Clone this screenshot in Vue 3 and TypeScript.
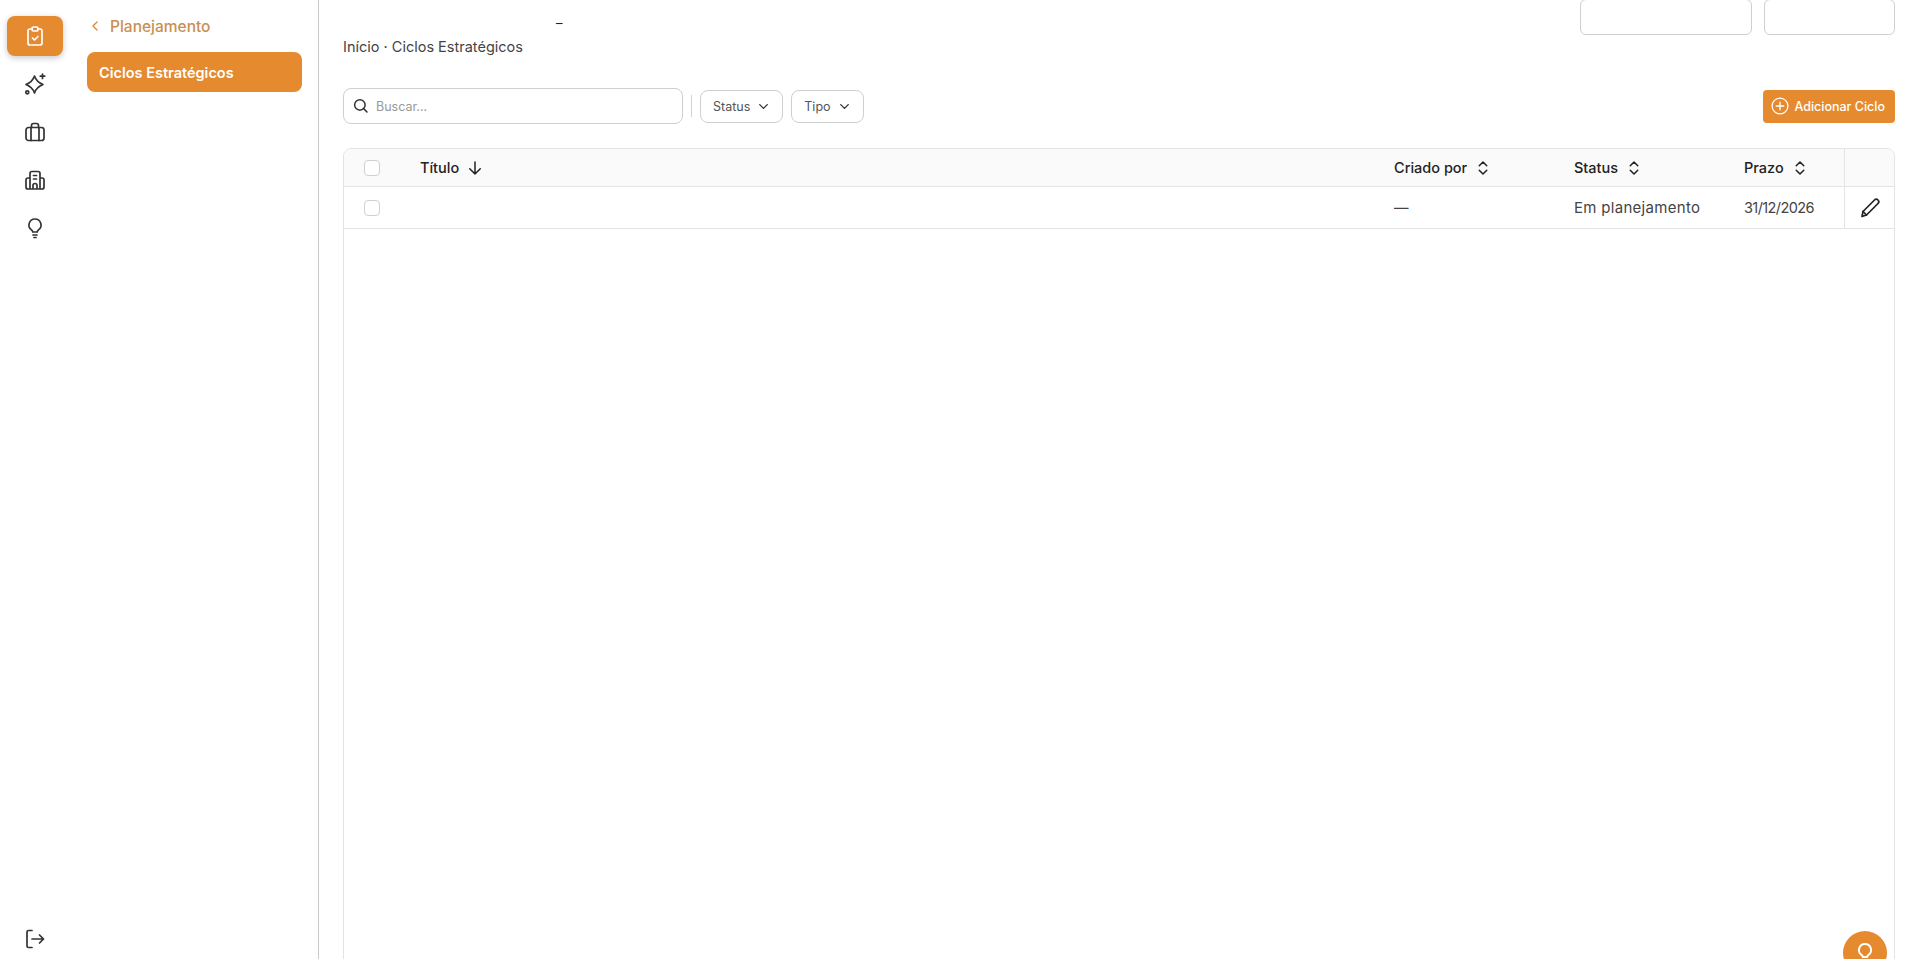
<template>
  <div class="page">
    <aside class="rail">
      <nav class="rail-top">
        <a class="rail-btn active">
          <svg viewBox="0 0 24 24"><path d="M9 5H7a2 2 0 0 0-2 2v12a2 2 0 0 0 2 2h10a2 2 0 0 0 2-2V7a2 2 0 0 0-2-2h-2" /><rect x="9" y="3" width="6" height="4" rx="1.600" /><path d="m9.500 14 2 2 3.500-3.500" /></svg>
        </a>
        <a class="rail-btn">
          <svg viewBox="0 0 24 24"><path d="M11.500 4Q13.500 10 20 12.500 13.500 15 11.500 21 9.500 15 3 12.500 9.500 10 11.500 4z" /><path d="M19.500 2v4.500M17.300 4.200h4.400" /><circle cx="4.300" cy="20.300" r="1.500" /></svg>
        </a>
        <a class="rail-btn">
          <svg viewBox="0 0 24 24"><rect x="3" y="7.500" width="18" height="13" rx="2.500" /><path d="M8 20.500v-13M16 20.500v-13M8.500 7.500V5.500a2 2 0 0 1 2-2h3a2 2 0 0 1 2 2v2" /></svg>
        </a>
        <a class="rail-btn">
          <svg viewBox="0 0 24 24"><path d="M7 21V5.500a2 2 0 0 1 2-2h6a2 2 0 0 1 2 2V21M7 10H5a2 2 0 0 0-2 2v7a2 2 0 0 0 2 2h14a2 2 0 0 0 2-2v-7a2 2 0 0 0-2-2h-2M10.500 7.500h3M10.500 11h3M10 21v-3.500a2 2 0 0 1 4 0V21" /></svg>
        </a>
        <a class="rail-btn">
          <svg viewBox="0 0 24 24"><path d="M12 3a6 6 0 0 0-3.500 10.900c.8.600 1.200 1.300 1.200 2.100h4.600c0-.8.400-1.500 1.200-2.100A6 6 0 0 0 12 3zM10 19h4M11 21.500h2" /></svg>
        </a>
      </nav>
      <a class="rail-btn logout">
        <svg viewBox="0 0 24 24"><path d="M9 3.500H5.500A1.500 1.500 0 0 0 4 5v14a1.500 1.500 0 0 0 1.500 1.500H9M9 12h11.500M16.500 8l4 4-4 4" /></svg>
      </a>
    </aside>

    <aside class="panel">
      <a class="back">
        <svg viewBox="0 0 24 24"><path d="m15 6-6 6 6 6" /></svg>
        <span>Planejamento</span>
      </a>
      <a class="panel-item">Ciclos Estratégicos</a>
    </aside>

    <main class="content">
      <header class="top">
        <div class="heading">
          <h1 class="title">–</h1>
          <p class="crumbs">Início · Ciclos Estratégicos</p>
        </div>
        <div class="top-actions">
          <div class="top-box wide"></div>
          <div class="top-box narrow"></div>
        </div>
      </header>

      <div class="toolbar">
        <label class="search">
          <svg viewBox="0 0 24 24"><circle cx="10.500" cy="10.500" r="7" /><path d="m20 20-4.500-4.500" /></svg>
          <span>Buscar...</span>
        </label>
        <span class="sep"></span>
        <button class="filter" v-for="f in filters" :key="f">
          {{ f }}
          <svg viewBox="0 0 24 24"><path d="m6 9 6 6 6-6" /></svg>
        </button>
        <button class="add">
          <svg viewBox="0 0 24 24"><circle cx="12" cy="12" r="9.500" /><path d="M12 7.500v9M7.500 12h9" /></svg>
          Adicionar Ciclo
        </button>
      </div>

      <section class="table">
        <div class="row head">
          <div class="cell"><span class="check"></span></div>
          <div class="cell">Título
            <svg class="sort" viewBox="0 0 24 24"><path d="M12 4v16M5 13l7 7 7-7" /></svg>
          </div>
          <div class="cell" v-for="c in sortable" :key="c">{{ c }}
            <svg class="sort" viewBox="0 0 24 24"><path d="m7 9 5-5 5 5M7 15l5 5 5-5" /></svg>
          </div>
          <div class="cell action"></div>
        </div>
        <div class="row body">
          <div class="cell"><span class="check"></span></div>
          <div class="cell"></div>
          <div class="cell">—</div>
          <div class="cell status">Em planejamento</div>
          <div class="cell date">31/12/2026</div>
          <div class="cell action">
            <svg class="pencil" viewBox="0 0 24 24"><path d="M4 20.500l1-5L16.500 4a2.500 2.500 0 0 1 3.500 0h0a2.500 2.500 0 0 1 0 3.500L8.500 19z" /><path d="M5 15.500l3.500 3.500" /></svg>
          </div>
        </div>
      </section>
    </main>

    <button class="fab">
      <svg viewBox="0 0 24 24"><path d="M12 3a6 6 0 0 0-3.500 10.900c.8.600 1.200 1.300 1.200 2.100h4.600c0-.8.400-1.500 1.200-2.100A6 6 0 0 0 12 3zM10 19h4M11 21.500h2" /></svg>
    </button>
  </div>
</template>

<script setup lang="ts">
const filters: string[] = ['Status', 'Tipo']
const sortable: string[] = ['Criado por', 'Status', 'Prazo']
</script>

<style>
html,
body {
  margin: 0;
  height: 100%;
  overflow: hidden;
  background: #fff;
}
</style>

<style scoped>
.page {
  display: flex;
  height: 959px;
  overflow: hidden;
  font-family: Inter, "Liberation Sans", sans-serif;
  color: #3f3f3f;
}

svg {
  fill: none;
  stroke: currentColor;
  stroke-width: 2;
  stroke-linecap: round;
  stroke-linejoin: round;
}

.rail {
  width: 70px;
  flex: none;
  display: flex;
  flex-direction: column;
  justify-content: space-between;
  align-items: center;
  padding-top: 16px;
  box-sizing: border-box;
}

.rail-top {
  display: flex;
  flex-direction: column;
  gap: 8px;
}

.rail-btn {
  width: 56px;
  height: 40px;
  display: flex;
  align-items: center;
  justify-content: center;
  border-radius: 8px;
  color: #333;
}

.rail-btn svg {
  width: 24px;
  height: 24px;
  stroke-width: 1.700;
}

.rail-btn.active {
  background: #e58a2e;
  color: #fff;
  box-shadow: 0 2px 6px rgba(0, 0, 0, 0.22);
}

.panel {
  width: 249px;
  flex: none;
  box-sizing: border-box;
  padding: 16px 16px 0 17px;
  border-right: 1px solid #c9c9c9;
}

.back {
  display: flex;
  align-items: center;
  gap: 7px;
  height: 20px;
  margin-bottom: 16px;
  color: #c98f52;
  font-size: 15.500px;
  font-weight: 500;
}

.back svg {
  width: 16px;
  height: 16px;
  color: #dd8a3a;
}

.panel-item {
  display: flex;
  align-items: center;
  height: 40px;
  padding: 0 12px;
  border-radius: 8px;
  background: #e58a2e;
  color: #fff;
  font-size: 14.500px;
  font-weight: 600;
}

.content {
  flex: 1;
  min-width: 0;
  padding: 0 24px;
  display: flex;
  flex-direction: column;
}

.top {
  display: flex;
  justify-content: space-between;
  align-items: flex-start;
  height: 88px;
  flex: none;
}

.heading {
  padding-top: 12px;
}

.title {
  margin: 0 0 0 213px;
  height: 22px;
  font-size: 13px;
  font-weight: 400;
  line-height: 22px;
  color: #222;
}

.crumbs {
  margin: 3px 0 0;
  font-size: 14.500px;
  line-height: 20px;
  color: #444;
}

.top-actions {
  display: flex;
  gap: 12px;
  margin-top: -1px;
}

.top-box {
  height: 36px;
  border: 1px solid #cfcfcf;
  border-radius: 6px;
  box-sizing: border-box;
}

.top-box.wide {
  width: 172px;
}

.top-box.narrow {
  width: 131px;
}

.toolbar {
  display: flex;
  align-items: center;
  flex: none;
  height: 36px;
  margin-bottom: 24px;
}

.search {
  width: 340px;
  height: 36px;
  box-sizing: border-box;
  display: flex;
  align-items: center;
  gap: 6px;
  padding: 0 8px;
  border: 1px solid #cfcfcf;
  border-radius: 8px;
  font-size: 12.500px;
  color: #9a9a9a;
}

.search svg {
  width: 18px;
  height: 18px;
  color: #333;
}

.sep {
  width: 1px;
  height: 22px;
  margin: 0 8px;
  background: #d2d2d2;
}

.filter {
  height: 33px;
  margin-right: 8px;
  padding: 0 11px 0 12px;
  display: flex;
  align-items: center;
  gap: 6px;
  border: 1px solid #cfcfcf;
  border-radius: 8px;
  background: #fff;
  font: inherit;
  font-size: 12.500px;
  color: #555;
}

.filter svg {
  width: 15px;
  height: 15px;
  color: #333;
  stroke-width: 2.200;
}

.add {
  margin-left: auto;
  height: 33px;
  padding: 0 10px 0 7px;
  display: flex;
  align-items: center;
  gap: 4px;
  border: none;
  border-radius: 4px;
  background: #e58a2e;
  color: #fff;
  font: inherit;
  font-size: 12.500px;
  font-weight: 500;
}

.add svg {
  width: 20px;
  height: 20px;
  stroke-width: 1.600;
}

.table {
  flex: none;
  height: 900px;
  box-sizing: border-box;
  border: 1px solid #e4e4e4;
  border-radius: 8px;
  overflow: hidden;
}

.row {
  display: grid;
  grid-template-columns: 76px 1fr 180px 170px 100px 50px;
  box-sizing: border-box;
  border-bottom: 1px solid #e4e4e4;
}

.row.head {
  height: 38px;
  background: #fafafa;
  color: #222;
  font-size: 14.500px;
  font-weight: 450;
}

.row.body {
  height: 42px;
  font-size: 14.500px;
  color: #444;
}

.cell {
  display: flex;
  align-items: center;
  gap: 7px;
}

.cell:first-child {
  padding-left: 20px;
}

.status {
  font-size: 15px;
  letter-spacing: 0.3px;
}

.date {
  letter-spacing: -0.6px;
}

.action {
  justify-content: center;
  border-left: 1px solid #e4e4e4;
}

.check {
  width: 16px;
  height: 16px;
  box-sizing: border-box;
  border: 1px solid #cfcfcf;
  border-radius: 4px;
  background: #fff;
}

.sort {
  width: 18px;
  height: 18px;
  color: #222;
}

.pencil {
  width: 24px;
  height: 24px;
  color: #222;
  stroke-width: 1.700;
}

.fab {
  position: fixed;
  right: 32px;
  bottom: -16px;
  width: 44px;
  height: 44px;
  padding: 0;
  display: flex;
  align-items: center;
  justify-content: center;
  border: none;
  border-radius: 50%;
  background: #e58a2e;
  color: #fff;
}

.fab svg {
  width: 24px;
  height: 24px;
}
</style>
